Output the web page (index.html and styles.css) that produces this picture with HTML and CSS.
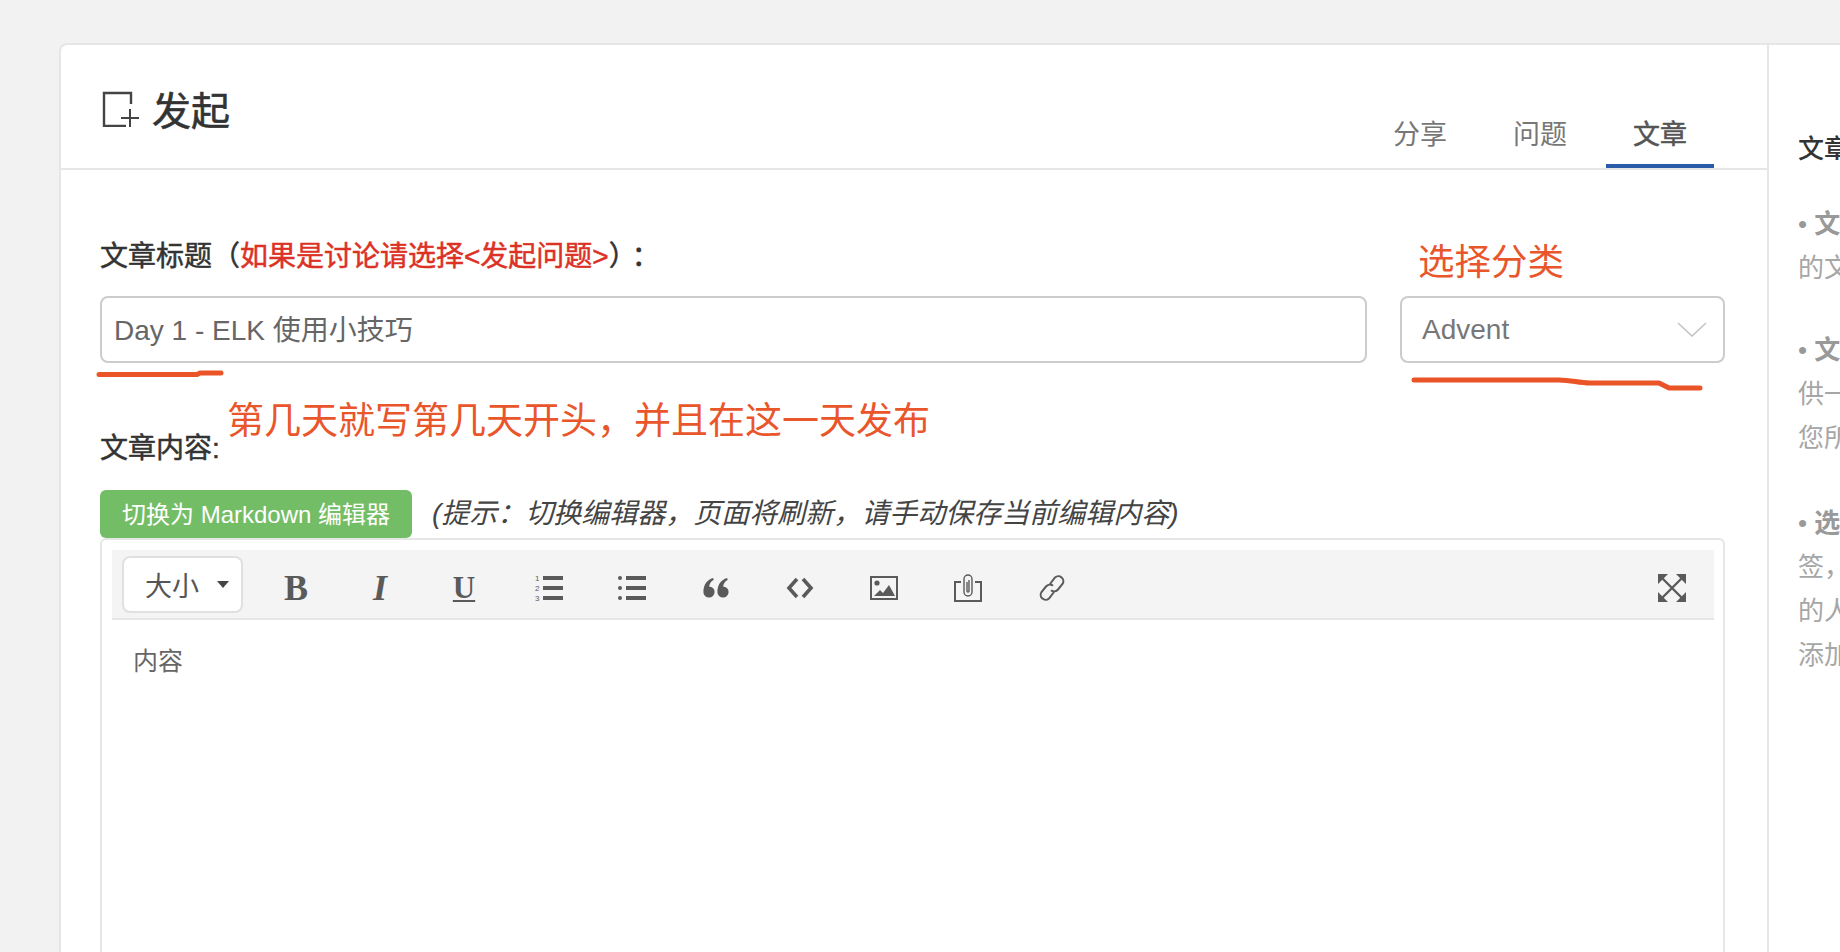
FILE: index.html
```html
<!DOCTYPE html>
<html lang="zh-CN">
<head>
<meta charset="utf-8">
<title>发起</title>
<link rel="stylesheet" href="styles.css">
</head>
<body>
<div class="page">
  <div class="card">
    <main class="main">
      <header class="head">
        <h1 class="head-title">
          <svg class="head-icon" width="38" height="36" viewBox="0 0 38 36" fill="none" stroke="#444" stroke-width="2.4"><path d="M30 13V2H3v33h22"/><path d="M20 27h18M29 18v18" stroke-width="2"/></svg>
          发起
        </h1>
        <nav class="tabs">
          <a class="tab">分享</a>
          <a class="tab">问题</a>
          <a class="tab tab-active">文章</a>
        </nav>
      </header>
      <section class="form">
        <div class="form-label">文章标题（<span class="warn">如果是讨论请选择&lt;发起问题&gt;</span><span class="punct">）</span>：</div>
        <div class="title-row">
          <div class="field field-text">Day 1 - ELK 使用小技巧</div>
          <div class="field field-select">Advent
            <svg width="30" height="15" viewBox="0 0 30 15" fill="none" stroke="#c4c4c4" stroke-width="1.6"><path d="M1 1l14 13L29 1"/></svg>
          </div>
        </div>
        <div class="form-label content-label">文章内容:</div>
        <div class="switch-row">
          <button class="switch-btn">切换为 Markdown 编辑器</button>
          <em class="switch-hint">(提示：切换编辑器，页面将刷新，请手动保存当前编辑内容)</em>
        </div>
        <div class="editor">
          <div class="toolbar">
            <div class="size-btn">大小<i class="caret"></i></div>
            <span class="tool tool-b">B</span>
            <span class="tool tool-i">I</span>
            <span class="tool tool-u">U</span>
            <span class="tool"><svg width="30" height="34" viewBox="0 -4 30 34" fill="#5a5a5a"><rect x="10" y="1" width="20" height="4"/><rect x="10" y="11" width="20" height="4"/><rect x="10" y="21" width="20" height="4"/><text x="2" y="6" class="ol-num">1</text><text x="2" y="16" class="ol-num">2</text><text x="2" y="26" class="ol-num">3</text></svg></span>
            <span class="tool"><svg width="28" height="26" viewBox="0 0 28 26" fill="#5a5a5a"><circle cx="2" cy="3" r="2"/><circle cx="2" cy="13" r="2"/><circle cx="2" cy="23" r="2"/><rect x="8" y="1" width="20" height="4"/><rect x="8" y="11" width="20" height="4"/><rect x="8" y="21" width="20" height="4"/></svg></span>
            <span class="tool"><svg width="26" height="20" viewBox="0 0 26 20" fill="#5a5a5a"><circle cx="6" cy="14" r="5.600"/><circle cx="20" cy="14" r="5.600"/><path d="M.5 13C.7 6.500 4 2 10 0l.8 1.700C7.500 3.500 6 6.500 6 10zM14.500 13C14.700 6.500 18 2 24 0l.8 1.700C21.500 3.500 20 6.500 20 10z"/></svg></span>
            <span class="tool"><svg width="28" height="22" viewBox="0 0 28 22" fill="none" stroke="#5a5a5a" stroke-width="3.600"><path d="M11 2L3 11l8 9M17 2l8 9-8 9"/></svg></span>
            <span class="tool"><svg width="28" height="24" viewBox="0 0 28 24"><rect x="1" y="1" width="26" height="22" fill="none" stroke="#5a5a5a" stroke-width="2"/><circle cx="7" cy="7" r="2.600" fill="#5a5a5a"/><path d="M4 20l6-6 3 3 6-8 6 11z" fill="#5a5a5a"/></svg></span>
            <span class="tool"><svg width="28" height="28" viewBox="0 0 28 28" fill="none" stroke="#5a5a5a"><path d="M7 8H1v19h26V8h-6" stroke-width="2"/><path d="M10 17V5a4 4 0 0 1 8 0v13a4 4 0 0 1-8 0V8M13 8v9a1 1 0 0 0 2 0V6" stroke-width="1.400"/></svg></span>
            <span class="tool"><svg width="28" height="28" viewBox="0 0 28 28" fill="none" stroke="#5a5a5a" stroke-width="2"><path d="M12 10l5-6.500a5 5 0 0 1 7.500 6.500l-4.500 5.500a5 5 0 0 1-7 .8"/><path d="M16 18l-5 6.500A5 5 0 0 1 3.500 18L8 12.500a5 5 0 0 1 7-.8"/></svg></span>
            <span class="tool tool-full"><svg width="28" height="28" viewBox="0 0 28 28" fill="#5a5a5a"><path d="M0 0h10L0 10zM28 0v10L18 0zM0 28V18l10 10zM28 28H18l10-10z"/><path d="M3 3l22 22M25 3L3 25" fill="none" stroke="#5a5a5a" stroke-width="2.400"/></svg></span>
          </div>
          <div class="editor-body">内容</div>
        </div>
      </section>
    </main>
    <aside class="side">
      <h2 class="side-title">文章发起指南</h2>
      <p class="side-item"><span class="dot">•</span> <b>文章标题</b>：请用准确的语言描述您发布<br>的文章思想</p>
      <p class="side-item"><span class="dot">•</span> <b>文章补充</b>：详细补充您的文章内容，并提<br>供一些相关的素材以供参与者更多的了解<br>您所要文章的主题思想</p>
      <p class="side-item"><span class="dot">•</span> <b>选择话题</b>：选择一个或者多个合适的话题标<br>签，让您发布的文章得到更多有相同兴趣<br>的人参与。所有人可以在您发布文章之后<br>添加和编辑该文章所属的话题</p>
    </aside>
  </div>
</div>
<div class="ink-note ink-category">选择分类</div>
<div class="ink-note ink-day">第几天就写第几天开头，并且在这一天发布</div>
<svg class="ink-lines" width="1840" height="952" viewBox="0 0 1840 952" fill="none" stroke="#ea5427" stroke-width="5" stroke-linecap="round" stroke-linejoin="round">
  <path d="M99 374.500H197L200 373H221"/>
  <path d="M1414 380H1559C1572 380 1578 383 1590 383H1659L1669 388H1700"/>
</svg>
</body>
</html>
```

FILE: styles.css
```css
* { box-sizing: border-box; }
html, body { margin: 0; height: 952px; overflow: hidden; }
body {
  position: relative;
  background: #f2f2f2;
  color: #333;
  font-family: "Liberation Sans", "Noto Sans CJK SC", sans-serif;
}
.page { padding: 43px 0 0 59px; height: 952px; }
.card {
  display: flex;
  height: 909px;
  background: #fff;
  border: 2px solid #e6e6e6;
  border-width: 2px 0 0 2px;
  border-top-left-radius: 8px;
}
.main { width: 1706px; flex: none; }
.head {
  display: flex;
  justify-content: space-between;
  align-items: flex-end;
  height: 125px;
  padding: 0 53px 0 40px;
  border-bottom: 2px solid #e6e6e6;
}
.head-title {
  display: flex;
  align-items: center;
  gap: 13px;
  margin: 0 0 30px;
  font-size: 39px;
  line-height: 52px;
  font-weight: 400;
  -webkit-text-stroke: 0.6px #333;
  color: #333;
}
.head-icon { margin-top: -6px; }
.tabs { display: flex; gap: 12px; }
.tab {
  width: 108px;
  height: 61px;
  text-align: center;
  font-size: 27px;
  line-height: 56px;
  color: #777;
  border-bottom: 4px solid transparent;
}
.tab-active { color: #555; -webkit-text-stroke: 0.5px #555; border-bottom-color: #2a5ba8; }
.form { padding: 67px 42px 0 39px; }
.form-label { font-size: 28px; line-height: 40px; -webkit-text-stroke: 0.5px #333; color: #333; }
.warn { color: #dc3226; -webkit-text-stroke: 0.5px #dc3226; }
.punct { letter-spacing: 9px; }
.title-row {
  display: grid;
  grid-template-columns: 1fr 325px;
  gap: 33px;
  margin-top: 19px;
}
.field {
  display: flex;
  align-items: center;
  justify-content: space-between;
  height: 67px;
  padding: 0 13px;
  border: 2px solid #ccc;
  border-radius: 8px;
  font-size: 28px;
  color: #666;
}
.field-text { padding: 0 12px 3px; }
.field-select { padding: 0 16px 0 20px; color: #777; }
.content-label { margin-top: 66px; }
.switch-row { display: flex; align-items: center; gap: 20px; margin-top: 21px; }
.switch-btn {
  width: 312px;
  height: 48px;
  padding: 0 0 3px;
  border: 0;
  border-radius: 6px;
  background: #74bd67;
  color: #fff;
  font: inherit;
  font-size: 24px;
}
.switch-hint { font-size: 28px; line-height: 48px; color: #444; }
.editor {
  height: 414px;
  padding: 10px 9px 0 10px;
  border: 2px solid #e6e6e6;
  border-bottom: 0;
  border-radius: 6px 6px 0 0;
}
.toolbar {
  display: flex;
  align-items: center;
  height: 70px;
  padding: 0 0 0 10px;
  background: #f4f4f4;
  border-bottom: 2px solid #e6e6e6;
}
.size-btn {
  display: flex;
  align-items: center;
  width: 121px;
  height: 57px;
  margin: 1px 11px 0 0;
  padding-left: 21px;
  background: #fff;
  border: 2px solid #e0e0e0;
  border-radius: 8px;
  font-size: 27px;
  color: #555;
}
.caret {
  margin-left: 18px;
  border: 6px solid transparent;
  border-top: 7px solid #444;
  border-bottom: 0;
}
.tool {
  display: flex;
  align-items: center;
  justify-content: center;
  width: 84px;
  height: 60px;
  padding-top: 8px;
  color: #5a5a5a;
  font-family: "Liberation Serif", serif;
  font-size: 36px;
}
.tool-b { font-weight: 700; }
.tool-i { font-style: italic; font-weight: 700; }
.tool-u { text-decoration: underline; text-decoration-thickness: 2px; text-underline-offset: 2px; font-weight: 700; font-size: 31px; }
.tool-full { margin-left: auto; }
.ol-num { font-family: "Liberation Sans", sans-serif; font-size: 8px; }
.editor-body { padding: 19px 21px; font-size: 25px; line-height: 44px; color: #666; }
.side {
  flex: 1;
  min-width: 0;
  overflow: hidden;
  padding: 0 0 0 29px;
  border-left: 2px solid #e6e6e6;
  white-space: nowrap;
}
.side-title { margin: 82px 0 0; font-size: 26px; line-height: 44px; font-weight: 500; color: #333; }
.side-item { margin: 30px 0 0; font-size: 26px; line-height: 44px; color: #a6a6a6; width: 540px; }
.side-title + .side-item { margin-top: 31px; }
.side-item + .side-item { margin-top: 38px; }
.side-item + .side-item + .side-item { margin-top: 41px; }
.side-item b { font-weight: 700; color: #999; }
.dot { color: #999; }
.ink-note {
  position: absolute;
  font-size: 36.5px;
  line-height: 48px;
  color: #e9562b;
  white-space: nowrap;
}
.ink-category { left: 1418px; top: 239px; }
.ink-day { left: 227px; top: 398px; font-size: 37px; }
.ink-lines { position: absolute; left: 0; top: 0; pointer-events: none; }
```
